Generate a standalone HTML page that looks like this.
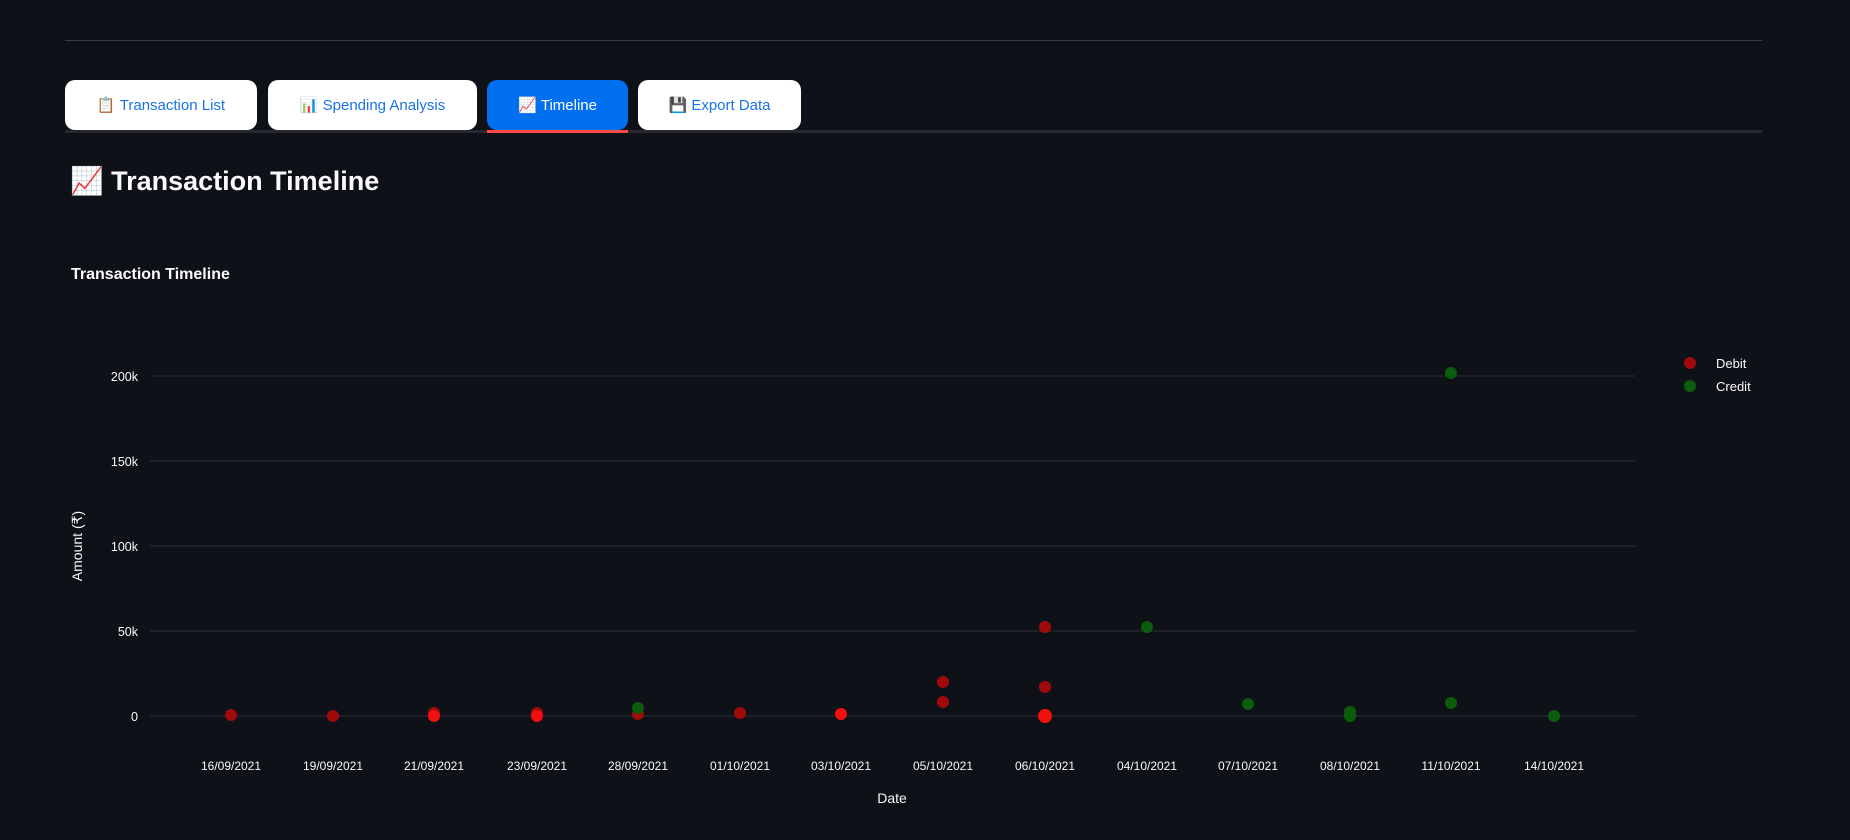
<!DOCTYPE html>
<html><head><meta charset="utf-8"><style>
body{margin:0;width:1850px;height:840px;background:#0e1117;font-family:"Liberation Sans",sans-serif;overflow:hidden;position:relative;color:#fafafa}
.hr{position:absolute;left:65px;top:40px;width:1697px;height:1px;background:#3a3d45}
.tab{position:absolute;top:80px;height:50px;border-radius:10px;background:#fff;color:#1a73e8;font-size:15px;display:flex;align-items:center;justify-content:center;box-sizing:border-box}
.tab.act{background:#0070f0;color:#fff}
.tabline{position:absolute;left:65px;top:130px;width:1697px;height:3px;background:#262730}
.red{position:absolute;left:487px;top:130px;width:141px;height:3px;background:#ff4b4b}
h2{position:absolute;left:70px;top:165px;margin:0;font-size:27px;font-weight:600}
h3{position:absolute;left:71px;top:266px;margin:0;font-size:16px;font-weight:bold}
</style></head><body>
<div class="hr"></div>
<div class="tab" style="left:65px;width:192px">📋&nbsp;Transaction List</div>
<div class="tab" style="left:268px;width:209px">📊&nbsp;Spending Analysis</div>
<div class="tab act" style="left:487px;width:141px">📈&nbsp;Timeline</div>
<div class="tab" style="left:638px;width:163px">💾&nbsp;Export Data</div>
<div class="tabline"></div><div class="red"></div>
<h2>📈 Transaction Timeline</h2>
<h3>Transaction Timeline</h3>
<svg width="1850" height="840" style="position:absolute;left:0;top:0" font-family="Liberation Sans, sans-serif">
<g stroke="#2c2f36" stroke-width="1">
<line x1="150" x2="1635" y1="376" y2="376"/><line x1="150" x2="1635" y1="461" y2="461"/>
<line x1="150" x2="1635" y1="546" y2="546"/><line x1="150" x2="1635" y1="631" y2="631"/>
<line x1="150" x2="1635" y1="716" y2="716"/></g>
<g fill="#fafafa" font-size="12.5" text-anchor="end">
<text x="138" y="381">200k</text><text x="138" y="466">150k</text><text x="138" y="551">100k</text><text x="138" y="636">50k</text><text x="138" y="721">0</text></g>
<g fill="#fafafa" font-size="12" text-anchor="middle">
<text x="231" y="770">16/09/2021</text><text x="333" y="770">19/09/2021</text><text x="434" y="770">21/09/2021</text><text x="537" y="770">23/09/2021</text><text x="638" y="770">28/09/2021</text><text x="740" y="770">01/10/2021</text><text x="841" y="770">03/10/2021</text><text x="943" y="770">05/10/2021</text><text x="1045" y="770">06/10/2021</text><text x="1147" y="770">04/10/2021</text><text x="1248" y="770">07/10/2021</text><text x="1350" y="770">08/10/2021</text><text x="1451" y="770">11/10/2021</text><text x="1554" y="770">14/10/2021</text>
<text x="892" y="803" font-size="14">Date</text>
<text transform="translate(82,546) rotate(-90)" font-size="14">Amount (₹)</text></g>
<g fill="#b00a0a" opacity="0.9">
<circle cx="231" cy="715" r="6"/><circle cx="333" cy="716" r="6"/><circle cx="434" cy="713" r="6"/><circle cx="537" cy="713" r="6"/>
<circle cx="638" cy="714" r="6"/><circle cx="740" cy="713" r="6"/><circle cx="943" cy="682" r="6"/><circle cx="943" cy="702" r="6"/>
<circle cx="1045" cy="627" r="6"/><circle cx="1045" cy="687" r="6"/></g>
<g fill="#f01010"><circle cx="434" cy="716" r="6"/><circle cx="537" cy="716" r="6"/><circle cx="841" cy="714" r="6"/><circle cx="1045" cy="716" r="7"/></g>
<g fill="#0b5c0b">
<circle cx="638" cy="708" r="6"/><circle cx="1147" cy="627" r="6"/><circle cx="1248" cy="704" r="6"/><circle cx="1350" cy="712" r="6"/><circle cx="1350" cy="716" r="6"/>
<circle cx="1451" cy="373" r="6"/><circle cx="1451" cy="703" r="6"/><circle cx="1554" cy="716" r="6"/></g>
<circle cx="1690" cy="363" r="6" fill="#a00c0c"/><circle cx="1690" cy="386" r="6" fill="#0b5c0b"/>
<g fill="#fafafa" font-size="13"><text x="1716" y="368">Debit</text><text x="1716" y="391">Credit</text></g>
</svg>
</body></html>
